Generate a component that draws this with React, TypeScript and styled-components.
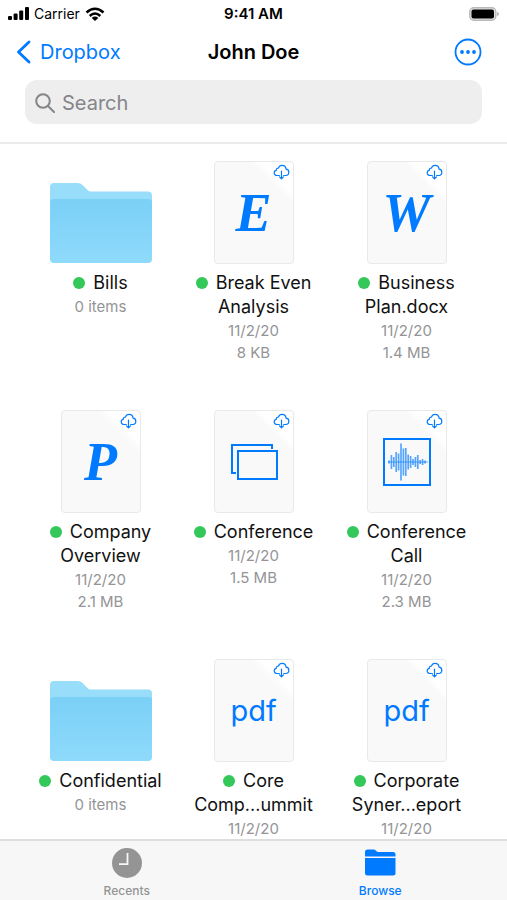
import React from "react";
import styled, { createGlobalStyle } from "styled-components";

const BLUE = "#007aff";
const GREY = "#949496";

const GlobalStyle = createGlobalStyle`
  *, *::before, *::after { box-sizing: border-box; }
  body {
    margin: 0;
    background: #fff;
    color: #111;
    font-family: Inter, "Liberation Sans", sans-serif;
  }
  button, input { font: inherit; color: inherit; }
`;

const Screen = styled.div`
  display: flex;
  flex-direction: column;
  height: 100vh;
  background: #fff;
`;

const StatusBar = styled.div`
  display: grid;
  grid-template-columns: 1fr auto 1fr;
  align-items: center;
  height: 28px;
  padding: 0 8px;
  color: #000;
  font-size: 14px;
  line-height: 20px;
`;

const Carrier = styled.div`
  display: flex;
  align-items: center;
  gap: 5px;
`;

const Clock = styled.time`
  font-size: 15px;
  font-weight: 600;
`;

const BatteryIcon = styled.svg`
  justify-self: end;
`;

const Header = styled.header`
  border-bottom: 2px solid #ebebeb;
  padding-bottom: 18px;
`;

const NavBar = styled.nav`
  display: grid;
  grid-template-columns: 1fr auto 1fr;
  align-items: center;
  height: 48px;
  padding: 0 16px;
`;

const BackLink = styled.a`
  display: flex;
  align-items: center;
  gap: 9px;
  color: ${BLUE};
  font-size: 20px;
  line-height: 24px;
  text-decoration: none;
`;

const Title = styled.h1`
  margin: 0;
  color: #000;
  font-size: 20px;
  font-weight: 600;
  line-height: 24px;
`;

const MoreButton = styled.button`
  display: flex;
  justify-self: end;
  margin-right: 9px;
  padding: 0;
  border: 0;
  background: none;
  color: ${BLUE};
`;

const SearchField = styled.label`
  display: flex;
  align-items: center;
  gap: 7px;
  height: 44px;
  margin: 4px 25px 0;
  padding: 1px 10px 0;
  border-radius: 12px;
  background: #eee;
  color: #858589;
`;

const SearchInput = styled.input`
  flex: 1;
  min-width: 0;
  padding: 0;
  border: 0;
  outline: 0;
  background: none;
  font-size: 20px;
  line-height: 24px;
  &::placeholder { color: #858589; opacity: 1; }
`;

const Files = styled.main`
  flex: 1;
  min-height: 0;
  overflow-y: auto;
  scrollbar-width: none;
`;

const FileGrid = styled.ul`
  display: grid;
  grid-template-columns: repeat(3, 1fr);
  grid-auto-rows: minmax(203px, auto);
  row-gap: 46px;
  margin: 0;
  padding: 17px 24px;
  list-style: none;
`;

const FileItem = styled.li`
  display: flex;
  flex-direction: column;
  align-items: center;
  text-align: center;
`;

const FolderThumb = styled.div`
  display: flex;
  flex-shrink: 0;
  align-items: flex-end;
  height: 103px;
`;

const DocThumb = styled.div`
  position: relative;
  display: flex;
  flex-shrink: 0;
  align-items: center;
  justify-content: center;
  width: 80px;
  height: 103px;
  border: 1px solid #e9e9e9;
  border-radius: 4px;
  background: linear-gradient(45deg, #f9f9f9 76%, #fff 82%);
  color: ${BLUE};
`;

const CloudIcon = styled.svg`
  position: absolute;
  top: 2px;
  right: 3px;
`;

const SerifGlyph = styled.span`
  font-family: "Liberation Serif", serif;
  font-size: 54px;
  font-style: italic;
  font-weight: 700;
  line-height: 60px;
`;

const PdfGlyph = styled.span`
  font-size: 29px;
  font-weight: 400;
  line-height: 40px;
`;

const FileName = styled.div`
  margin: 7px 0 1px;
  font-size: 18px;
  line-height: 24px;
  white-space: pre-line;
`;

const SyncDot = styled.span`
  display: inline-block;
  width: 12px;
  height: 12px;
  margin-right: 8px;
  border-radius: 50%;
  background: #34c759;
`;

const Meta = styled.div`
  color: ${GREY};
  font-size: 15px;
  line-height: 22px;
`;

const TabBar = styled.nav`
  display: grid;
  grid-template-columns: 1fr 1fr;
  height: 61px;
  border-top: 2px solid #dedede;
  background: #f7f7f7;
`;

const Tab = styled.button<{ $active?: boolean }>`
  display: flex;
  flex-direction: column;
  align-items: center;
  gap: 4px;
  padding: 5px 0 0;
  border: 0;
  background: none;
  color: ${(p) => (p.$active ? BLUE : "#949494")};
  font-size: 12px;
  font-weight: 500;
  line-height: 18px;
`;

const Folder = () => (
  <svg width="104" height="82" viewBox="0 0 104 82" aria-hidden="true">
    <defs>
      <linearGradient id="folder" x1="0" y1="0" x2="0" y2="1">
        <stop offset="0" stopColor="#7bd0f6" />
        <stop offset="1" stopColor="#8edafb" />
      </linearGradient>
    </defs>
    <path d="M1 30V5q0-4 4-4h24q2.500 0 4 1.500l5.500 5.500q1.500 1.500 3.500 1.500h57q4 0 4 4V30z" fill="#98defb" />
    <path d="M1 20q0-3 4-3h94q4 0 4 3v57q0 4-4 4H5q-4 0-4-4z" fill="url(#folder)" />
  </svg>
);

const Cloud = () => (
  <CloudIcon width="17" height="16" viewBox="0 0 17 16" fill="none" stroke="currentColor" strokeWidth="1.200" strokeLinecap="round" strokeLinejoin="round" aria-hidden="true">
    <path d="M6.300 11.500H4.200C2.300 11.500 1.200 10.400 1.200 8.900 1.200 7.500 2 6.600 3.300 6.400 3.200 4.900 4 4 5.400 4.100 6.100 2.200 7.400 1.300 9 1.300c2.300 0 3.900 1.600 4.100 3.900 1.700.2 2.700 1.400 2.700 3.100 0 1.900-1.200 3.200-3 3.200h-2.100" />
    <path d="M8.500 7v7.700M6.500 12.900l2 2 2-2" />
  </CloudIcon>
);

const Slides = () => (
  <svg width="48" height="36" viewBox="0 0 48 36" fill="none" stroke="currentColor" strokeWidth="2" aria-hidden="true">
    <path d="M6 29H2V1h40v4" />
    <path d="M8 7h39v28H8z" />
  </svg>
);

const WAVE = [3, 14, 10, 20, 17, 37, 27, 28, 15, 12, 6, 10, 14, 4, 6, 3];

const Waveform = () => (
  <svg width="48" height="48" viewBox="0 0 48 48" fill="none" stroke="currentColor" aria-hidden="true">
    <path d="M1 1h46v46H1z" strokeWidth="2" />
    <path d="M5 24h40" strokeWidth="1" opacity="0.600" />
    {WAVE.map((h, i) => (
      <path key={i} d={`M${6 + i * 2.4} ${24 - h / 2}v${h}`} strokeWidth="1.700" opacity="0.650" />
    ))}
  </svg>
);

type Kind = "folder" | "E" | "W" | "P" | "slides" | "audio" | "pdf";
type FileEntry = { kind: Kind; name: string; meta: string[] };

const FILES: FileEntry[] = [
  { kind: "folder", name: "Bills", meta: ["0 items"] },
  { kind: "E", name: "Break Even\nAnalysis", meta: ["11/2/20", "8 KB"] },
  { kind: "W", name: "Business\nPlan.docx", meta: ["11/2/20", "1.4 MB"] },
  { kind: "P", name: "Company\nOverview", meta: ["11/2/20", "2.1 MB"] },
  { kind: "slides", name: "Conference", meta: ["11/2/20", "1.5 MB"] },
  { kind: "audio", name: "Conference\nCall", meta: ["11/2/20", "2.3 MB"] },
  { kind: "folder", name: "Confidential", meta: ["0 items"] },
  { kind: "pdf", name: "Core\nComp...ummit", meta: ["11/2/20"] },
  { kind: "pdf", name: "Corporate\nSyner...eport", meta: ["11/2/20"] },
];

const Glyph = ({ kind }: { kind: Kind }) => {
  if (kind === "slides") return <Slides />;
  if (kind === "audio") return <Waveform />;
  if (kind === "pdf") return <PdfGlyph>pdf</PdfGlyph>;
  return <SerifGlyph>{kind}</SerifGlyph>;
};

const Thumb = ({ kind }: { kind: Kind }) =>
  kind === "folder" ? (
    <FolderThumb><Folder /></FolderThumb>
  ) : (
    <DocThumb><Glyph kind={kind} /><Cloud /></DocThumb>
  );

export default function App() {
  return (
    <Screen>
      <GlobalStyle />
      <StatusBar>
        <Carrier>
          <svg width="21" height="14" viewBox="0 0 21 14" fill="currentColor" aria-hidden="true">
            <rect x="0" y="9" width="4" height="4" rx="1" />
            <rect x="5.600" y="6.500" width="4" height="6.500" rx="1" />
            <rect x="11.200" y="3.500" width="4" height="9.500" rx="1" />
            <rect x="17" y="0" width="4" height="13" rx="1" />
          </svg>
          <span>Carrier</span>
          <svg width="20" height="15" viewBox="0 0 20 15" fill="none" stroke="currentColor" strokeWidth="2.600" aria-hidden="true">
            <path d="M1.500 5.500Q10-2 18.500 5.500" />
            <path d="M4.700 9Q10 4 15.300 9" />
            <path d="M10 14 6.700 10.900Q10 8.300 13.300 10.900z" fill="currentColor" stroke="none" />
          </svg>
        </Carrier>
        <Clock>9:41 AM</Clock>
        <BatteryIcon width="30" height="14" viewBox="0 0 30 14" aria-hidden="true">
          <rect x="0.800" y="0.800" width="26" height="12.400" rx="4" fill="#e4e4e4" stroke="#b9b9b9" strokeWidth="1.400" />
          <rect x="2.500" y="2.500" width="22.500" height="9" rx="2" fill="#000" />
          <path d="M28 5q2 .7 2 2t-2 2z" fill="#b5b5b5" />
        </BatteryIcon>
      </StatusBar>
      <Header>
        <NavBar>
          <BackLink href="#dropbox">
            <svg width="15" height="24" viewBox="0 0 15 24" fill="none" stroke="currentColor" strokeWidth="2.800" strokeLinecap="round" strokeLinejoin="round" aria-hidden="true">
              <path d="M13 2 2.500 12 13 22" />
            </svg>
            Dropbox
          </BackLink>
          <Title>John Doe</Title>
          <MoreButton aria-label="More options">
            <svg width="28" height="28" viewBox="0 0 28 28" fill="currentColor" aria-hidden="true">
              <circle cx="14" cy="14" r="12.500" fill="none" stroke="currentColor" strokeWidth="1.800" />
              <circle cx="8" cy="14" r="1.900" />
              <circle cx="14" cy="14" r="1.900" />
              <circle cx="20" cy="14" r="1.900" />
            </svg>
          </MoreButton>
        </NavBar>
        <SearchField>
          <svg width="20" height="20" viewBox="0 0 20 20" fill="none" stroke="currentColor" strokeWidth="2" strokeLinecap="round" aria-hidden="true">
            <circle cx="8" cy="8" r="6.800" />
            <path d="m13 13 6 6" />
          </svg>
          <SearchInput type="search" placeholder="Search" aria-label="Search" />
        </SearchField>
      </Header>
      <Files>
        <FileGrid>
          {FILES.map((file) => (
            <FileItem key={file.name}>
              <Thumb kind={file.kind} />
              <FileName><SyncDot />{file.name}</FileName>
              {file.meta.map((line) => <Meta key={line}>{line}</Meta>)}
            </FileItem>
          ))}
        </FileGrid>
      </Files>
      <TabBar>
        <Tab>
          <svg width="32" height="32" viewBox="0 0 32 32" aria-hidden="true">
            <circle cx="16" cy="17" r="15" fill="currentColor" />
            <path d="M16.500 7v11.200H8" fill="none" stroke="#f7f7f7" strokeWidth="1.800" />
          </svg>
          Recents
        </Tab>
        <Tab $active>
          <svg width="32" height="32" viewBox="0 0 32 32" fill="currentColor" aria-hidden="true">
            <path d="M1 10.500V6q0-2.500 2.500-2.500h6q1.500 0 2.500 1.200t2.500 1.200H29q2.500 0 2.500 2.500v2.100z" />
            <path d="M1 12h30.500v15q0 2.500-2.500 2.500H3.500Q1 29.500 1 27z" />
          </svg>
          Browse
        </Tab>
      </TabBar>
    </Screen>
  );
}
